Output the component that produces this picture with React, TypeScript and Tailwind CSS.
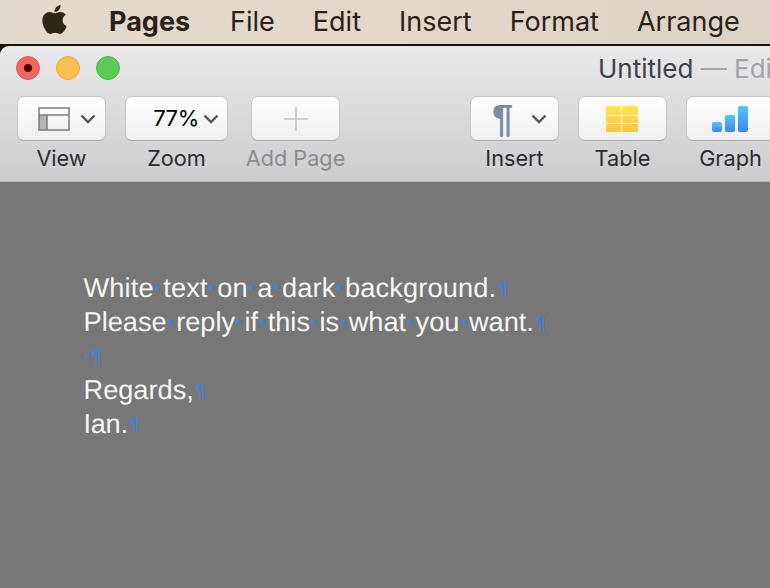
import { FaApple } from 'react-icons/fa'

const uiFont = 'font-["Inter","Liberation_Sans",sans-serif]'

const menuItems = ['File', 'Edit', 'Insert', 'Format', 'Arrange']

function Chevron() {
  return (
    <svg width="16" height="10" viewBox="0 0 16 10" className="shrink-0">
      <path d="M1.5 1.5 L8 8 L14.5 1.5" fill="none" stroke="#555" strokeWidth="2.4" />
    </svg>
  )
}

function ToolButton({
  label,
  width,
  labelClass = 'text-[#2c2c2e]',
  children,
}: {
  label: string
  width: string
  labelClass?: string
  children: React.ReactNode
}) {
  return (
    <div className={`flex flex-col items-center shrink-0 ${width}`}>
      <div className="flex h-[45px] w-full items-center justify-center rounded-[7px] border border-[#c6c6c8] border-b-[#aeaeb0] bg-gradient-to-b from-white to-[#efeff0]">
        {children}
      </div>
      <span className={`mt-[4px] text-[21.7px] leading-[26px] whitespace-nowrap ${labelClass}`}>{label}</span>
    </div>
  )
}

function Dot() {
  return <span className="inline-block w-[9.5px] text-center font-bold text-[#3f82dc]">·</span>
}

function Pilcrow() {
  return <span className="ml-[2px] inline-block align-[2px] text-[19px] leading-none text-[#3f82dc]">¶</span>
}

function DocLine({ text, className = '' }: { text: string; className?: string }) {
  const words = text.split(' ')
  return (
    <div className={`h-[34px] leading-[34px] whitespace-nowrap ${className}`}>
      {words.map((word, i) => (
        <span key={i}>
          {i > 0 ? <Dot /> : null}
          {word}
        </span>
      ))}
      <Pilcrow />
    </div>
  )
}

export default function App() {
  return (
    <div className={`flex h-[588px] w-[770px] flex-col overflow-hidden bg-[#1a1208] ${uiFont}`}>
      <div className="flex h-[44px] shrink-0 items-center bg-gradient-to-r from-[#e2d9ce] via-[#e3d7ca] to-[#dcd2c7] pt-[1px] text-[27px] text-[#2b2116]">
        <FaApple className="ml-[38px] mb-[6px] text-[33px] text-[#2e2619]" />
        <span className="ml-[38px] font-bold">Pages</span>
        <div className="ml-[40px] flex gap-[38px]">
          {menuItems.map((item) => (
            <span key={item}>{item}</span>
          ))}
        </div>
      </div>

      <div className="mt-[2px] flex min-h-0 flex-1 flex-col overflow-hidden rounded-tl-[9px] bg-[#777777]">
        <div className="h-[136px] shrink-0 border-b border-[#b4b4b6] bg-gradient-to-b from-[#e9e9eb] to-[#cdcdd0]">
          <div className="flex h-[50px] items-center pb-[6px] pl-[16px]">
            <div className="flex gap-[16px]">
              <div className="flex h-[24px] w-[24px] items-center justify-center rounded-full border border-[#dc5f56] bg-[#f2685f]">
                <div className="h-[8px] w-[8px] rounded-full bg-[#4d0503]" />
              </div>
              <div className="h-[24px] w-[24px] rounded-full border border-[#e3a93e] bg-[#fcc04f]" />
              <div className="h-[24px] w-[24px] rounded-full border border-[#4eb245] bg-[#5ec957]" />
            </div>
            <div className="ml-[478px] whitespace-nowrap text-[26px] text-[#3f4048]">
              Untitled <span className="text-[#a3a3a8]">— Edi</span>
            </div>
          </div>

          <div className="flex pl-[17px]">
            <ToolButton label="View" width="w-[89px]">
              <svg width="32" height="24" viewBox="0 0 32 24" className="ml-[10px] mr-[10px]">
                <rect x="1" y="8" width="8" height="15" fill="#b4b4b6" />
                <rect x="1" y="1" width="30" height="22" fill="none" stroke="#7b7b7d" strokeWidth="1.5" />
                <path d="M1 8 H31 M9 8 V23" stroke="#7b7b7d" strokeWidth="1.5" />
              </svg>
              <Chevron />
            </ToolButton>
            <div className="ml-[19px]">
              <ToolButton label="Zoom" width="w-[103px]">
                <span className="ml-[19px] mr-[4px] text-[22px] tracking-[-0.4px] text-black">77%</span>
                <Chevron />
              </ToolButton>
            </div>
            <div className="ml-[23px]">
              <ToolButton label="Add Page" width="w-[89px]" labelClass="text-[#8c8c8f]">
                <svg width="26" height="26" viewBox="0 0 26 26">
                  <path d="M13 1 V25 M1 13 H25" stroke="#c4c4c6" strokeWidth="1.6" />
                </svg>
              </ToolButton>
            </div>
            <div className="ml-[130px]">
              <ToolButton label="Insert" width="w-[89px]">
                <span className="ml-[10px] mr-[18px] font-['Liberation_Sans',sans-serif] text-[38px] leading-none font-bold text-[#7c8ba1]">¶</span>
                <Chevron />
              </ToolButton>
            </div>
            <div className="ml-[19px]">
              <ToolButton label="Table" width="w-[89px]">
                <svg width="32" height="26" viewBox="0 0 32 26" className="mr-[2px]">
                  <defs>
                    <linearGradient id="tableFill" x1="0" y1="0" x2="0" y2="1">
                      <stop offset="0" stopColor="#ffe64d" />
                      <stop offset="1" stopColor="#fbc53e" />
                    </linearGradient>
                  </defs>
                  <rect width="32" height="26" rx="1.5" fill="url(#tableFill)" />
                  <path d="M15.5 0 V26 M0 9.5 H32 M0 17.5 H32" stroke="#fff3bf" strokeWidth="1.2" />
                </svg>
              </ToolButton>
            </div>
            <div className="ml-[19px]">
              <ToolButton label="Graph" width="w-[89px]">
                <svg width="36" height="26" viewBox="0 0 36 26" className="mr-[1px]">
                  <defs>
                    <linearGradient id="barFill" x1="0" y1="0" x2="0" y2="1">
                      <stop offset="0" stopColor="#55c4f6" />
                      <stop offset="1" stopColor="#3a86ec" />
                    </linearGradient>
                  </defs>
                  <rect x="0" y="16" width="10" height="10" rx="2" fill="url(#barFill)" />
                  <rect x="13" y="9" width="10" height="17" rx="2" fill="url(#barFill)" />
                  <rect x="26" y="0" width="10" height="26" rx="2" fill="url(#barFill)" />
                </svg>
              </ToolButton>
            </div>
          </div>
        </div>

        <div className="flex-1 pl-[83.5px] pt-[89px] font-['Liberation_Sans',sans-serif] text-[27.2px] text-[#f6f6f6] [text-rendering:geometricPrecision]">
          <DocLine text="White text on a dark background." className="tracking-[0.15px]" />
          <DocLine text="Please reply if this is what you want." />
          <div className="h-[34px] leading-[34px] whitespace-nowrap">
            <Dot />
            <span className="ml-[-3px]">
              <Pilcrow />
            </span>
          </div>
          <DocLine text="Regards," />
          <DocLine text="Ian." className="tracking-[-0.3px]" />
        </div>
      </div>
    </div>
  )
}
